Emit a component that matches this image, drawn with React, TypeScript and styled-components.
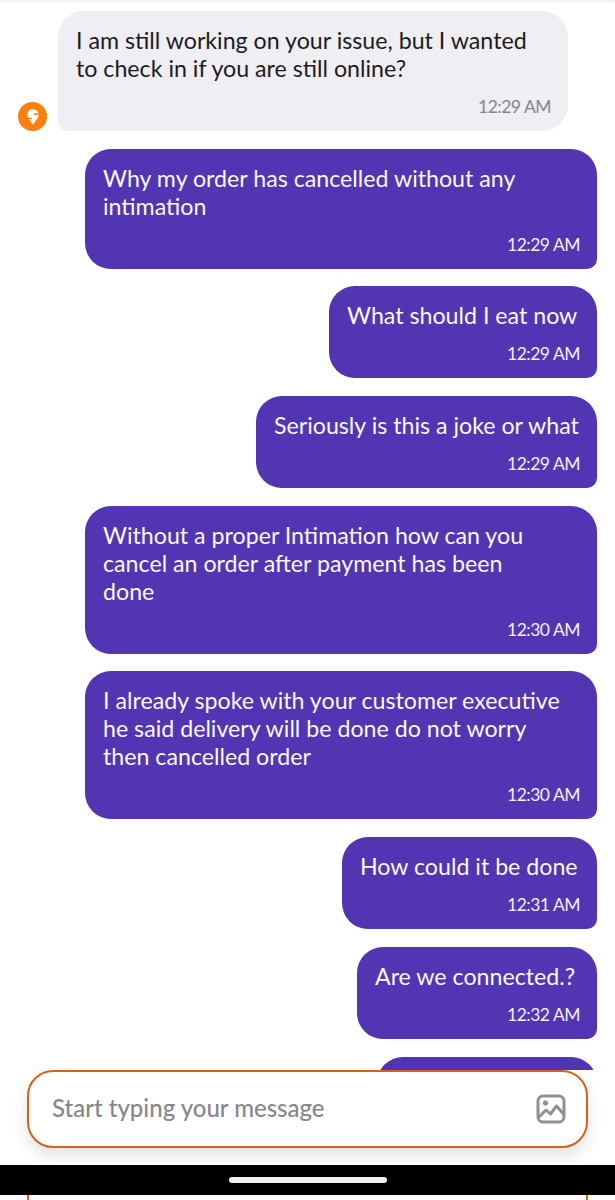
import React from "react";
import styled, { createGlobalStyle } from "styled-components";

const GlobalStyle = createGlobalStyle`
    html, body {
        margin: 0;
        padding: 0;
        background: #fff;
    }
`;

const Screen = styled.div`
    display: flex;
    flex-direction: column;
    width: 615px;
    height: 1200px;
    overflow: hidden;
    background: #fff;
    font-family: Lato, "Open Sans", sans-serif;
`;

const MessageList = styled.div`
    display: flex;
    flex-direction: column;
    gap: 17.7px;
    height: 1059px;
    padding: 11px 18px 0;
    overflow: hidden;
    flex-shrink: 0;
    background: linear-gradient(#f1f1f2, #fff 4px);
`;

const Row = styled.div<{ $incoming?: boolean }>`
    display: flex;
    flex-shrink: 0;
    align-items: flex-end;
    gap: 11px;
    justify-content: ${(p) => (p.$incoming ? "flex-start" : "flex-end")};
`;

const Avatar = styled.div`
    display: flex;
    align-items: center;
    justify-content: center;
    width: 29px;
    height: 29px;
    border-radius: 50%;
    background: #fd7f0c;
`;

const Bubble = styled.div<{ $incoming?: boolean; $width: number }>`
    box-sizing: border-box;
    width: ${(p) => p.$width}px;
    padding: 15px 17px 12px 18px;
    border-radius: ${(p) => (p.$incoming ? "26px 26px 26px 10px" : "26px 26px 10px 26px")};
    background: ${(p) => (p.$incoming ? "#eeeef3" : "#5135b3")};
    color: ${(p) => (p.$incoming ? "#1c1c20" : "#fbf9ff")};
`;

// last bubble, only its top shows above the composer
const CutOffBubble = styled.div`
    width: 220px;
    height: 92px;
    border-radius: 26px 26px 10px 26px;
    background: #5135b3;
`;

const MessageText = styled.div`
    font-size: 23.2px;
    line-height: 28px;
    white-space: nowrap;
`;

const Time = styled.div<{ $incoming?: boolean }>`
    margin-top: 13px;
    font-size: 17.5px;
    letter-spacing: -0.5px;
    line-height: 24px;
    text-align: right;
    color: ${(p) => (p.$incoming ? "#85858a" : "#f3f0fb")};
`;

const Composer = styled.div`
    display: flex;
    align-items: center;
    justify-content: space-between;
    flex-shrink: 0;
    box-sizing: border-box;
    width: 561px;
    height: 78px;
    margin: 0 0 17px 27px;
    padding: 0 20px 0 23px;
    border: 2px solid #d4621d;
    border-radius: 26px;
    background: #fff;
    box-shadow: 0 8px 16px rgba(60, 60, 70, 0.14);
    position: relative;
`;

const Placeholder = styled.span`
    padding-bottom: 3px;
    font-size: 24px;
    font-weight: 500;
    color: #85878c;
`;

const NavBar = styled.div`
    display: flex;
    align-items: center;
    justify-content: center;
    flex-shrink: 0;
    height: 30px;
    background: #000;
`;

const HomeIndicator = styled.div`
    width: 158px;
    height: 6px;
    border-radius: 3px;
    background: #eee;
`;

const BottomEdge = styled.div`
    box-sizing: border-box;
    width: 561px;
    height: 5px;
    margin-left: 27px;
    border-left: 2px solid #d4621d;
    border-right: 2px solid #d4621d;
`;

const BrandIcon = () => (
    <svg width="12" height="16" viewBox="0 0 12 16">
        <path d="M6 .3C2.7.3.3 2.8.3 5.8c0 1.6.7 3 1.7 4.3L6 15.7l4-5.6c1-1.3 1.7-2.7 1.7-4.3C11.7 2.8 9.3.3 6 .3z" fill="#fff" />
        <path d="M7 5h5M0 9.3h5" stroke="#fd7f0c" strokeWidth="1.3" fill="none" />
    </svg>
);

const ImageIcon = () => (
    <svg width="30" height="30" viewBox="0 0 30 30" fill="none" stroke="#909093" strokeWidth="3" strokeLinecap="round" strokeLinejoin="round">
        <rect x="2" y="2" width="26" height="26" rx="5" />
        <circle cx="9.5" cy="9" r="2.2" fill="#909093" strokeWidth="1" />
        <path d="M3 23l7-7 4.5 4 6-8 7 8" />
    </svg>
);

type Message = { lines: string[]; time: string; width: number };

const outgoing: Message[] = [
    { lines: ["Why my order has cancelled without any", "intimation"], time: "12:29 AM", width: 512 },
    { lines: ["What should I eat now"], time: "12:29 AM", width: 268 },
    { lines: ["Seriously is this a joke or what"], time: "12:29 AM", width: 341 },
    { lines: ["Without a proper Intimation how can you", "cancel an order after payment has been", "done"], time: "12:30 AM", width: 512 },
    { lines: ["I already spoke with your customer executive", "he said delivery will be done do not worry", "then cancelled order"], time: "12:30 AM", width: 512 },
    { lines: ["How could it be done"], time: "12:31 AM", width: 255 },
    { lines: ["Are we connected.?"], time: "12:32 AM", width: 240 },
];

const renderLines = (lines: string[]) =>
    lines.map((line, i) => <div key={i}>{line}</div>);

export default function App() {
    return (
        <Screen>
            <GlobalStyle />
            <MessageList>
                <Row $incoming>
                    <Avatar><BrandIcon /></Avatar>
                    <Bubble $incoming $width={510}>
                        <MessageText>
                            {renderLines(["I am still working on your issue, but I wanted", "to check in if you are still online?"])}
                        </MessageText>
                        <Time $incoming>12:29 AM</Time>
                    </Bubble>
                </Row>
                {outgoing.map((m, i) => (
                    <Row key={i}>
                        <Bubble $width={m.width}>
                            <MessageText>{renderLines(m.lines)}</MessageText>
                            <Time>{m.time}</Time>
                        </Bubble>
                    </Row>
                ))}
                <Row><CutOffBubble /></Row>
            </MessageList>
            <Composer>
                <Placeholder>Start typing your message</Placeholder>
                <ImageIcon />
            </Composer>
            <NavBar><HomeIndicator /></NavBar>
            <BottomEdge />
        </Screen>
    );
}
